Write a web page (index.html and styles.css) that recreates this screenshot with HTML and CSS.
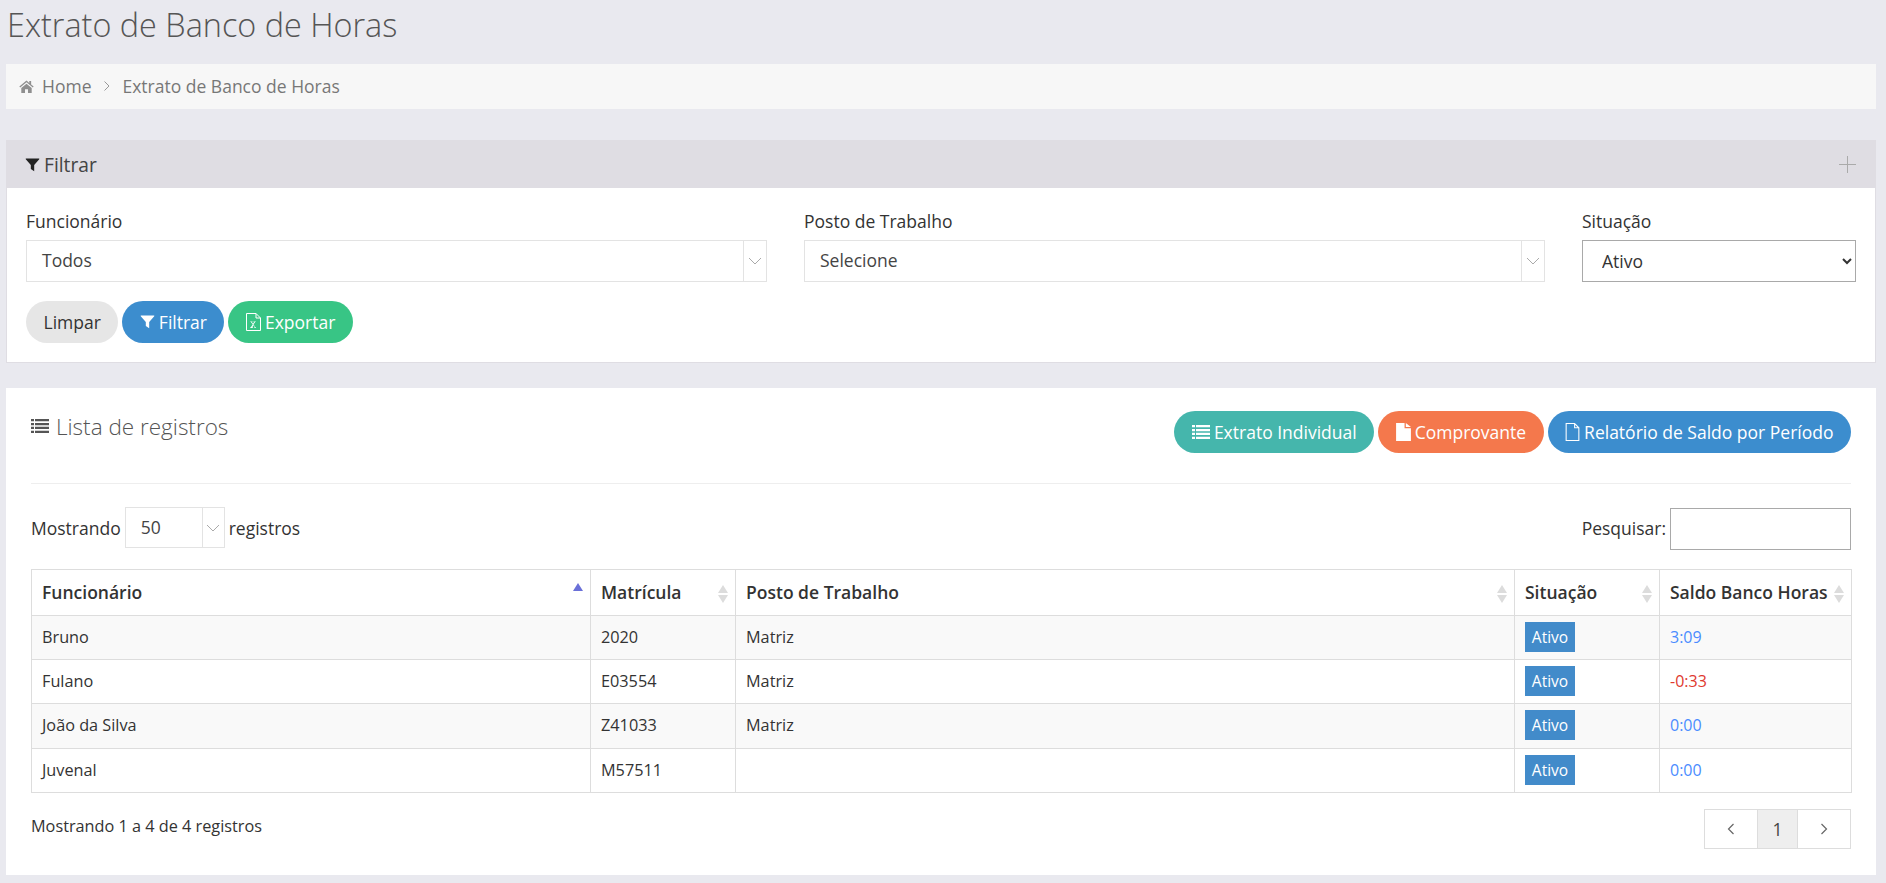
FILE: index.html
```html
<!DOCTYPE html>
<html lang="pt-BR">
<head>
<meta charset="utf-8">
<title>Extrato de Banco de Horas</title>
<link rel="stylesheet" href="styles.css">
</head>
<body>
<h1 class="page-title">Extrato de Banco de Horas</h1>
<nav class="breadcrumb">
  <svg class="ico ico-home" viewBox="0 0 16 14"><path d="M8 0.6 0.3 7l.9 1.1L8 2.5l6.8 5.6.9-1.1-2.7-2.2V1.2h-2v2.1zM2.4 8.7V14h4V10h3.2v4h4V8.7L8 4.1z"/></svg>
  <span>Home</span>
  <svg class="crumb-sep" viewBox="0 0 8 12"><path d="M1.5 1.5 6 6l-4.500 4.500" fill="none" stroke="currentColor" stroke-width="1"/></svg>
  <span>Extrato de Banco de Horas</span>
</nav>

<section class="panel filter-panel">
  <header class="filter-head">
    <div class="filter-title">
      <svg class="ico ico-filter-dark" viewBox="0 0 16 16"><path d="M.8 1.500h14.400v1L9.800 8.500v6.800L6.200 12.800V8.500L.8 2.500z"/></svg>
      <span>Filtrar</span>
    </div>
    <svg class="plus" viewBox="0 0 17 17"><path d="M8.500 0v17M0 8.500h17" fill="none" stroke="currentColor" stroke-width="1"/></svg>
  </header>
  <div class="filter-body">
    <div class="filter-grid">
      <div class="field">
        <label>Funcionário</label>
        <div class="chosen"><span class="chosen-value">Todos</span><span class="chosen-arrow"><svg viewBox="0 0 14 8"><path d="M1 1l6 6 6-6" fill="none" stroke="currentColor" stroke-width="1"/></svg></span></div>
      </div>
      <div class="field">
        <label>Posto de Trabalho</label>
        <div class="chosen"><span class="chosen-value">Selecione</span><span class="chosen-arrow"><svg viewBox="0 0 14 8"><path d="M1 1l6 6 6-6" fill="none" stroke="currentColor" stroke-width="1"/></svg></span></div>
      </div>
      <div class="field">
        <label>Situação</label>
        <select class="native-select"><option>Ativo</option></select>
      </div>
    </div>
    <div class="btn-row">
      <button class="btn btn-gray">Limpar</button>
      <button class="btn btn-blue"><svg class="ico" viewBox="0 0 16 16"><path d="M.8 1.500h14.400v1L9.800 8.500v6.800L6.200 12.800V8.500L.8 2.500z"/></svg>Filtrar</button>
      <button class="btn btn-green"><svg class="ico ico-file ico-xls" viewBox="0 0 15 18"><path d="M.5.5h9.500l4.500 4.500v12.500H.5zM10 .5V5h4.500" fill="none" stroke="currentColor" stroke-width="1"/><path d="M4.300 8.500h2.200v.6h-.6l1.100 1.700 1.100-1.700h-.6v-.6h2.300v.6h-.6l-1.700 2.400 1.900 2.800h.5v.7H8.300v-.7h.6l-1.300-2-1.300 2h.6v.7H4.200v-.7h.6l1.900-2.800-1.800-2.400h-.6z"/></svg>Exportar</button>
    </div>
  </div>
</section>

<section class="panel list-panel">
  <header class="list-head">
    <h2 class="list-title">
      <svg class="ico ico-list" viewBox="0 0 18 14"><path d="M0 0h3v2.300H0zM4 0h14v2.300H4zM0 3.900h3v2.300H0zM4 3.900h14v2.300H4zM0 7.800h3v2.300H0zM4 7.800h14v2.300H4zM0 11.700h3V14H0zM4 11.700h14V14H4z"/></svg>
      <span>Lista de registros</span>
    </h2>
    <div class="list-actions">
      <button class="btn btn-teal"><svg class="ico ico-list-w" viewBox="0 0 18 14"><path d="M0 0h3v2.300H0zM4 0h14v2.300H4zM0 3.900h3v2.300H0zM4 3.900h14v2.300H4zM0 7.800h3v2.300H0zM4 7.800h14v2.300H4zM0 11.700h3V14H0zM4 11.700h14V14H4z"/></svg>Extrato Individual</button>
      <button class="btn btn-orange"><svg class="ico ico-file" viewBox="0 0 14 17"><path d="M0 0h8v5h6v12H0zM9.200 0 14 3.800H9.200z"/></svg>Comprovante</button>
      <button class="btn btn-blue"><svg class="ico ico-file" viewBox="0 0 14 17"><path d="M1 .5h8l4 4v12H1z M9 .5v4h4" fill="none" stroke="currentColor" stroke-width="1"/></svg>Relatório de Saldo por Período</button>
    </div>
  </header>
  <div class="table-tools">
    <div class="length">
      <span>Mostrando</span>
      <div class="chosen chosen-small"><span class="chosen-value">50</span><span class="chosen-arrow"><svg viewBox="0 0 14 8"><path d="M1 1l6 6 6-6" fill="none" stroke="currentColor" stroke-width="1"/></svg></span></div>
      <span>registros</span>
    </div>
    <div class="search">
      <label>Pesquisar:</label>
      <input class="search-input" type="text">
    </div>
  </div>
  <table class="grid">
    <colgroup>
      <col class="c-name"><col class="c-mat"><col class="c-posto"><col class="c-sit"><col class="c-saldo">
    </colgroup>
    <thead>
      <tr>
        <th><span class="th-label">Funcionário</span><span class="sort sort-up"></span></th>
        <th><span class="th-label">Matrícula</span><span class="sort"></span></th>
        <th><span class="th-label">Posto de Trabalho</span><span class="sort"></span></th>
        <th><span class="th-label">Situação</span><span class="sort"></span></th>
        <th><span class="th-label">Saldo Banco Horas</span><span class="sort"></span></th>
      </tr>
    </thead>
    <tbody>
      <tr class="odd"><td>Bruno</td><td>2020</td><td>Matriz</td><td><span class="badge">Ativo</span></td><td class="pos">3:09</td></tr>
      <tr><td>Fulano</td><td>E03554</td><td>Matriz</td><td><span class="badge">Ativo</span></td><td class="neg">-0:33</td></tr>
      <tr class="odd tall"><td>João da Silva</td><td>Z41033</td><td>Matriz</td><td><span class="badge">Ativo</span></td><td class="pos">0:00</td></tr>
      <tr><td>Juvenal</td><td>M57511</td><td></td><td><span class="badge">Ativo</span></td><td class="pos">0:00</td></tr>
    </tbody>
  </table>
  <footer class="table-foot">
    <span class="info">Mostrando 1 a 4 de 4 registros</span>
    <div class="pager">
      <a class="page page-prev"><svg viewBox="0 0 8 12"><path d="M6.500 1 1.500 6l5 5" fill="none" stroke="currentColor" stroke-width="1.200"/></svg></a>
      <a class="page page-cur">1</a>
      <a class="page page-next"><svg viewBox="0 0 8 12"><path d="M1.500 1l5 5-5 5" fill="none" stroke="currentColor" stroke-width="1.200"/></svg></a>
    </div>
  </footer>
</section>
</body>
</html>
```

FILE: styles.css
```css
* { box-sizing: border-box; }
html, body { height: 100%; }
body {
  margin: 0;
  padding: 0 10px 8px 6px;
  background: #e9e9ef;
  color: #333;
  font-family: "Open Sans", "Noto Sans", sans-serif;
  font-size: 17.500px;
  line-height: 22px;
  overflow: hidden;
}
.ico { width: 15px; height: 15px; fill: currentColor; flex: none; }

.page-title {
  margin: 0;
  height: 64px;
  padding: 3px 0 0 1px;
  font-size: 32.400px;
  line-height: 42px;
  font-weight: 300;
  color: #555;
}

.breadcrumb {
  display: flex;
  align-items: center;
  height: 45px;
  padding: 0 0 1px 13px;
  background: #f7f7f7;
  color: #777;
}
.ico-home { width: 15px; height: 13px; margin-right: 8px; color: #8f8f8f; }
.crumb-sep { width: 8px; height: 12px; margin: 0 11px 0 12px; color: #999; }

.panel { background: #fff; }

.filter-panel {
  margin-top: 31px;
  height: 223px;
  border: 1px solid #dfdde3;
  border-top: 0;
}
.filter-head {
  display: flex;
  align-items: center;
  justify-content: space-between;
  height: 48px;
  margin: 0 -1px;
  padding: 1px 20px 0 19px;
  background: #dfdde3;
}
.filter-title { display: flex; align-items: center; gap: 4px; font-size: 19.200px; color: #444; font-weight: 400; }
.ico-filter-dark { width: 15px; height: 15px; color: #222; }
.plus { width: 17px; height: 17px; color: #aaa; }

.filter-body { padding: 22px 19px 0 19px; }
.filter-grid {
  display: grid;
  grid-template-columns: 741px 741px 274px;
  column-gap: 37px;
}
.field label { display: block; height: 30px; line-height: 22px; color: #333; }

.chosen {
  display: flex;
  align-items: stretch;
  height: 42px;
  border: 1px solid #e3e3e3;
  background: #fff;
  color: #444;
}
.chosen-value { flex: 1; padding-left: 15px; line-height: 39px; }
.chosen-arrow {
  display: flex;
  align-items: center;
  justify-content: center;
  width: 23px;
  border-left: 1px solid #e3e3e3;
  color: #aaa;
}
.chosen-arrow svg { width: 14px; height: 8px; }

.native-select {
  display: block;
  width: 100%;
  height: 42px;
  padding: 0 0 0 15px;
  border: 1px solid #a9a9a9;
  border-radius: 0;
  background: #fff;
  color: #333;
  font-family: inherit;
  font-size: 17.500px;
}

.btn-row { display: flex; gap: 4px; margin-top: 19px; }
.btn {
  display: inline-flex;
  align-items: center;
  justify-content: center;
  gap: 4px;
  height: 42px;
  padding: 0 17.500px 1px;
  border: 0;
  border-radius: 21px;
  font-family: inherit;
  font-size: 17.500px;
  color: #fff;
  white-space: nowrap;
}
.btn-gray { background: #e6e6e6; color: #333; }
.btn-blue { background: #3c8dce; }
.btn-green { background: #38c585; }
.btn-teal { background: #45b6ac; }
.btn-orange { background: #f4784c; }
.ico-file { width: 15px; height: 18px; }
.ico-xls { width: 15px; height: 18px; }
.ico-list-w { width: 18px; height: 14px; }

.list-panel {
  margin-top: 25px;
  height: 487px;
  padding: 0 25px;
}
.list-head {
  display: flex;
  justify-content: space-between;
  height: 96px;
  padding-top: 23px;
  border-bottom: 1px solid #eee;
}
.list-title {
  display: flex;
  align-items: flex-start;
  gap: 7px;
  margin: 0;
  padding-top: 2px;
  font-size: 22.500px;
  line-height: 27px;
  font-weight: 300;
  color: #555;
}
.ico-list { width: 18px; height: 14px; margin-top: 6px; color: #555; }
.list-actions { display: flex; gap: 4px; }

.table-tools {
  display: flex;
  justify-content: space-between;
  align-items: flex-start;
  height: 43px;
  margin-top: 23px;
}
.length { display: flex; align-items: center; gap: 4px; color: #333; }
.chosen-small { width: 100px; height: 41px; }
.chosen-small .chosen-value { line-height: 38px; }
.chosen-small .chosen-arrow { width: 22px; }
.search { display: flex; align-items: center; gap: 4px; }
.search label { padding-bottom: 1px; }
.search-input {
  width: 181px;
  height: 42px;
  margin-top: 1px;
  border: 1px solid #a9a9a9;
  background: #fff;
  padding: 0;
}

.grid {
  width: 1820px;
  margin-top: 19px;
  border-collapse: collapse;
  table-layout: fixed;
  font-size: 16.250px;
}
.c-name { width: 559px; }
.c-mat { width: 145px; }
.c-posto { width: 779px; }
.c-sit { width: 145px; }
.c-saldo { width: 192px; }
.grid th, .grid td {
  border: 1px solid #ddd;
  padding: 0 0 2px 10px;
  text-align: left;
  vertical-align: middle;
}
.grid th {
  position: relative;
  height: 46px;
  font-size: 17.500px;
  font-weight: 600;
  color: #333;
  white-space: nowrap;
}
.grid td { height: 44px; color: #333; }
.grid tr.tall td { height: 45px; }
.grid .odd td { background: #f9f9f9; }
.grid td.pos { color: #4a8cff; font-size: 16px; }
.grid td.neg { color: #e0392e; font-size: 16px; }

.sort {
  position: absolute;
  right: 6px;
  top: 15px;
  width: 11px;
  height: 18px;
}
.sort::before, .sort::after {
  content: "";
  position: absolute;
  left: 0;
  border-left: 5.500px solid transparent;
  border-right: 5.500px solid transparent;
}
.sort::before { top: 0; border-bottom: 8px solid #dcdcdc; }
.sort::after { bottom: 0; border-top: 8px solid #dcdcdc; }
.sort-up { top: 13px; }
.sort-up::before { border-bottom-color: #6a70d8; }
.sort-up::after { display: none; }

.badge {
  display: block;
  width: 50px;
  height: 30px;
  line-height: 30px;
  text-align: center;
  background: #428bca;
  color: #fff;
  font-size: 15.500px;
}

.table-foot {
  display: flex;
  justify-content: space-between;
  align-items: flex-start;
  margin-top: 16px;
}
.info { padding-top: 6px; font-size: 16.250px; line-height: 22px; color: #333; }
.pager { display: flex; height: 40px; border: 1px solid #ddd; }
.page {
  display: flex;
  align-items: center;
  justify-content: center;
  color: #666;
}
.page svg { width: 8px; height: 12px; }
.page-prev { width: 52px; }
.page-cur { width: 41px; background: #eee; border-left: 1px solid #ddd; border-right: 1px solid #ddd; color: #444; }
.page-next { width: 52px; }
```
